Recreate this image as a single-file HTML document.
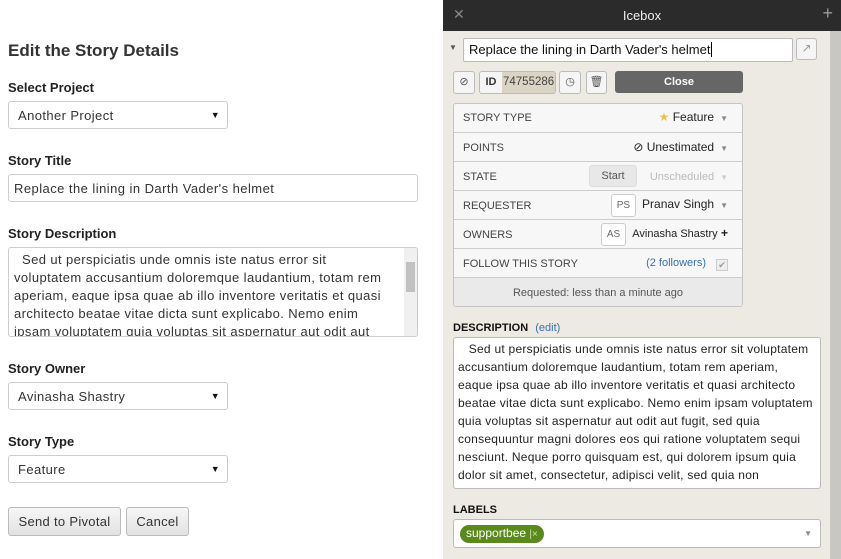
<!DOCTYPE html>
<html><head><style>
*{box-sizing:border-box;margin:0;padding:0}
body{width:841px;height:559px;position:relative;overflow:hidden;font-family:"Liberation Sans",sans-serif;background:#fff;color:#333}
.a{position:absolute}
.lbl{position:absolute;left:8px;font-size:13px;font-weight:bold;color:#222}
.sel{position:absolute;left:8px;width:220px;height:28px;border:1px solid #ccc;border-radius:3px;font-size:13px;padding:6px 0 0 9px;color:#333;background:#fff;letter-spacing:0.4px}
.sel:after{content:"▼";position:absolute;right:7px;top:8px;font-size:9px;color:#111}
.btn{position:absolute;top:507px;height:29px;border:1px solid #bbb;border-radius:3px;background:linear-gradient(#f6f6f6,#e2e2e2);font-size:13px;text-align:center;padding-top:6px;color:#333;letter-spacing:0.3px}
#r{position:absolute;left:443px;top:0;width:398px;height:559px;background:#eceae3}
.hdr{position:absolute;left:0;top:0;width:398px;height:31px;background:#2b2b2b;color:#eee;font-size:13px;text-align:center;padding-top:8px}
.tb{position:absolute;top:71px;height:23px;border:1px solid #bbb;border-radius:3px;background:#f5f5f5;font-size:11px;color:#555}
.row{position:absolute;left:0;width:288px;height:29px;border-top:1px solid #ccc;font-size:11px;color:#444;padding:9px 0 0 9px}
.rv{position:absolute;right:14px;top:7px;font-size:12px;color:#222}
.dd{font-size:8px;color:#888;margin-left:6px}
.ini{display:inline-block;border:1px solid #ccc;border-radius:3px;font-size:10px;color:#666;padding:5px 5px;margin-right:6px;background:#fff}
</style></head><body>
<div class="a" style="left:8px;top:41px;font-size:17px;font-weight:bold;color:#333">Edit the Story Details</div>
<div class="lbl" style="top:80px">Select Project</div>
<div class="sel" style="top:101px">Another Project</div>
<div class="lbl" style="top:153px">Story Title</div>
<div class="a" style="left:8px;top:174px;width:410px;height:28px;border:1px solid #ccc;border-radius:3px;font-size:13px;padding:6px 0 0 5px;letter-spacing:0.45px">Replace the lining in Darth Vader's helmet</div>
<div class="lbl" style="top:226px">Story Description</div>
<div class="a" style="left:8px;top:247px;width:410px;height:90px;border:1px solid #ccc;border-radius:3px;font-size:13px;line-height:18px;padding:3px 26px 0 5px;overflow:hidden;color:#333;letter-spacing:0.4px">&nbsp;&nbsp;Sed ut perspiciatis unde omnis iste natus error sit voluptatem accusantium doloremque laudantium, totam rem aperiam, eaque ipsa quae ab illo inventore veritatis et quasi architecto beatae vitae dicta sunt explicabo. Nemo enim ipsam voluptatem quia voluptas sit aspernatur aut odit aut fugit, sed
<div class="a" style="right:0;top:0;width:13px;height:88px;background:#f0f0f0"><div class="a" style="left:2px;top:14px;width:9px;height:30px;background:#c1c1c1"></div></div></div>
<div class="lbl" style="top:361px">Story Owner</div>
<div class="sel" style="top:382px">Avinasha Shastry</div>
<div class="lbl" style="top:434px">Story Type</div>
<div class="sel" style="top:455px">Feature</div>
<div class="btn" style="left:8px;width:113px">Send to Pivotal</div>
<div class="btn" style="left:126px;width:63px">Cancel</div>

<div id="r">
<div class="a" style="right:0;top:31px;width:11px;height:528px;background:#c9c7c1"></div>
<div class="hdr">Icebox<span class="a" style="left:10px;top:6px;color:#888;font-size:14px">✕</span><span class="a" style="right:8px;top:3px;color:#999;font-size:18px">+</span></div>
<div class="a" style="left:6px;top:43px;font-size:8px;color:#555">▼</div>
<div class="a" style="left:20px;top:38px;width:330px;height:24px;background:#fff;border:1px solid #bbb;border-radius:2px;font-size:13px;color:#111;padding:3px 0 0 5px">Replace the lining in Darth Vader's helmet<span style="border-left:1px solid #000;margin-left:1px"></span></div>
<div class="a" style="left:353px;top:38px;width:21px;height:22px;border:1px solid #bbb;border-radius:3px;background:#f5f5f5;color:#999;font-size:12px;text-align:center;padding-top:2px">↗</div>
<div class="tb" style="left:10px;width:22px;text-align:center;padding-top:3px">⊘</div>
<div class="tb" style="left:36px;width:77px;overflow:hidden"><span class="a" style="left:0;top:0;width:22px;height:21px;text-align:center;font-weight:bold;color:#333;padding-top:4px">ID</span><span class="a" style="left:22px;top:0;width:55px;height:21px;background:#d9d4c4;padding:4px 0 0 1px;font-size:11.5px;color:#444">74755286</span></div>
<div class="tb" style="left:116px;width:22px;text-align:center;padding-top:3px">◷</div>
<div class="tb" style="left:143px;width:21px;text-align:center;padding-top:3px">🗑</div>
<div class="a" style="left:172px;top:71px;width:128px;height:22px;background:#666;border-radius:3px;color:#fff;font-size:11px;font-weight:bold;text-align:center;padding-top:5px">Close</div>
<div class="a" style="left:10px;top:103px;width:290px;height:204px;border:1px solid #c4c4c4;border-radius:3px;background:#f7f7f7;overflow:hidden">
<div class="row" style="top:-1px;border-top:none">STORY TYPE<span class="rv"><span style="color:#e6c34a">★</span> Feature<span class="dd">▼</span></span></div>
<div class="row" style="top:28px">POINTS<span class="rv">⊘ Unestimated<span class="dd">▼</span></span></div>
<div class="row" style="top:57px">STATE<span class="a" style="left:135px;top:3px;width:48px;height:22px;background:#e8e8e8;border:1px solid #ddd;border-radius:3px;text-align:center;padding-top:4px;color:#555">Start</span><span class="rv" style="color:#bbb;font-size:11px;top:9px">Unscheduled<span class="dd" style="color:#ccc">▼</span></span></div>
<div class="row" style="top:86px">REQUESTER<span class="rv" style="top:3px"><span class="ini">PS</span>Pranav Singh<span class="dd">▼</span></span></div>
<div class="row" style="top:115px">OWNERS<span class="rv" style="top:3px"><span class="ini">AS</span><span style="font-size:11px">Avinasha Shastry</span> <b>+</b></span></div>
<div class="row" style="top:144px">FOLLOW THIS STORY<span class="rv" style="top:8px;font-size:11px;color:#3a6fb0">(2 followers)<span style="display:inline-block;width:12px;height:12px;border:1px solid #ccc;background:#eee;margin-left:10px;vertical-align:-2px;font-size:9px;color:#999;text-align:center">✔</span></span></div>
<div class="row" style="top:173px;background:#eaeaea;text-align:center;padding:9px 0 0 0;color:#555">Requested: less than a minute ago</div>
</div>
<div class="a" style="left:10px;top:322px;font-size:11px;font-weight:bold;color:#111">DESCRIPTION <span style="font-weight:normal;color:#3a6fb0;margin-left:4px">(edit)</span></div>
<div class="a" style="left:10px;top:337px;width:368px;height:152px;background:#fff;border:1px solid #bbb;border-radius:3px;font-size:12px;line-height:18px;padding:2px 6px 0 4px;overflow:hidden;color:#222;letter-spacing:0.25px">&nbsp;&nbsp;&nbsp;Sed ut perspiciatis unde omnis iste natus error sit voluptatem accusantium doloremque laudantium, totam rem aperiam, eaque ipsa quae ab illo inventore veritatis et quasi architecto beatae vitae dicta sunt explicabo. Nemo enim ipsam voluptatem quia voluptas sit aspernatur aut odit aut fugit, sed quia consequuntur magni dolores eos qui ratione voluptatem sequi nesciunt. Neque porro quisquam est, qui dolorem ipsum quia dolor sit amet, consectetur, adipisci velit, sed quia non numquam eius modi tempora incidunt ut labore et dolore</div>
<div class="a" style="left:10px;top:504px;font-size:11px;font-weight:bold;color:#111">LABELS</div>
<div class="a" style="left:10px;top:519px;width:368px;height:29px;background:#fff;border:1px solid #bbb;border-radius:3px">
<span class="a" style="left:6px;top:5px;height:18px;background:#5a8a1c;border-radius:9px;color:#fff;font-size:12px;padding:1px 6px 0 6px">supportbee <span style="color:#cde0b0;font-size:10px">|×</span></span>
<span class="a" style="right:8px;top:9px;font-size:8px;color:#888">▼</span></div>
</div>
</body></html>
